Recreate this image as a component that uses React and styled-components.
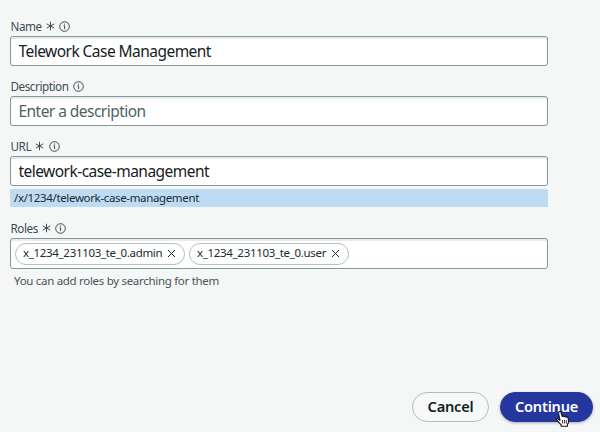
import React from "react";
import styled, { createGlobalStyle } from "styled-components";

const GlobalStyle = createGlobalStyle`
  * { box-sizing: border-box; }
  body { margin: 0; background: #f5f7f7; font-family: "Noto Sans", "Open Sans", sans-serif; }
`;

const Page = styled.main`
  width: 600px;
  height: 432px;
  padding: 18px 0 0 10px;
  display: flex;
  flex-direction: column;
  background: #f5f7f7;
  overflow: hidden;
`;

const Form = styled.form`
  width: 538px;
  display: flex;
  flex-direction: column;
`;

const Field = styled.section`
  display: flex;
  flex-direction: column;
  height: ${(p) => p.$height}px;
`;

const LabelRow = styled.div`
  display: flex;
  align-items: center;
  height: 16px;
  margin-bottom: 2px;
  color: #3d4d4f;
`;

const Label = styled.label`
  font-size: 11.7px;
  line-height: 15px;
  letter-spacing: -0.45px;
  padding-left: 0.5px;
`;

const Icon = styled.svg`
  flex: none;
  display: block;
  margin-left: ${(p) => p.$gap || 0}px;
  fill: none;
  stroke: currentColor;
`;

const Box = styled.div`
  display: flex;
  align-items: center;
  flex: none;
  height: ${(p) => p.$height || 30}px;
  padding-left: ${(p) => p.$inset || 7.5}px;
  gap: 4px;
  border: 1px solid #84979a;
  border-radius: 3px;
  background: #fff;
  box-shadow: inset 0 2px 0 #e8ecec;
`;

const Input = styled.input`
  width: 100%;
  height: 26px;
  padding: 0 0 1px;
  border: 0;
  outline: 0;
  background: transparent;
  color: #172022;
  font: 15.5px/25px "Noto Sans", "Open Sans", sans-serif;
  letter-spacing: -0.54px;
  &::placeholder { color: #506163; opacity: 1; }
`;

const UrlPreview = styled.div`
  height: 18px;
  margin-top: 3px;
  padding-left: 4px;
  flex: none;
  border-radius: 1px;
  background: #bddcf3;
  color: #1c2b30;
  font-size: 11.5px;
  line-height: 17px;
  letter-spacing: -0.35px;
`;

const Pill = styled.span`
  display: flex;
  align-items: center;
  justify-content: space-between;
  width: ${(p) => p.$width}px;
  height: 22px;
  padding: 0 8px 0 7px;
  border: 1px solid #b4c0c1;
  border-radius: 11px;
  background: #fff;
  color: #202a2c;
  font-size: 11.5px;
  line-height: 18px;
  letter-spacing: -0.32px;
`;

const PillText = styled.span`
  padding-bottom: 2px;
`;

const Hint = styled.p`
  margin: 3px 0 0 4px;
  color: #465557;
  font-size: 11.5px;
  line-height: 18px;
  letter-spacing: -0.3px;
`;

const Actions = styled.footer`
  display: flex;
  gap: 11px;
  margin: auto 7px 10px auto;
`;

const Button = styled.button`
  position: relative;
  width: ${(p) => p.$width}px;
  height: 30px;
  padding: 0 0 3px;
  border: 1px solid ${(p) => (p.$primary ? "#24379e" : "#b2bcbe")};
  border-radius: 15px;
  background: ${(p) => (p.$primary ? "#24379e" : "#f7f9f9")};
  box-shadow: ${(p) => (p.$primary ? "0 1px 3px #737c8299" : "none")};
  color: ${(p) => (p.$primary ? "#fff" : "#151f21")};
  font: 600 14.6px/26px "Noto Sans", "Open Sans", sans-serif;
  letter-spacing: -0.2px;
`;

const Pointer = styled.svg`
  position: absolute;
  left: 54px;
  top: 18px;
`;

const Required = () => (
  <Icon width="9" height="10" viewBox="0 0 9 10" $gap={4} strokeWidth="1">
    <path d="M4.5 .8v8.4M.8 2.9l7.4 4.2M8.2 2.9L.8 7.1" />
  </Icon>
);

const Info = () => (
  <Icon width="11" height="11" viewBox="0 0 11 11" $gap={4.5}>
    <circle cx="5.5" cy="5.5" r="4.8" strokeWidth="1" />
    <path d="M4.5 4.8h1.1v3.3" strokeWidth="1" />
    <circle cx="5.5" cy="3.1" r=".65" fill="currentColor" stroke="none" />
  </Icon>
);

const Role = ({ name, width }) => (
  <Pill $width={width}>
    <PillText>{name}</PillText>
    <Icon width="9" height="9" viewBox="0 0 9 9" strokeWidth="1">
      <path d="M1 1l7 7M8 1L1 8" />
    </Icon>
  </Pill>
);

const Heading = ({ children, required }) => (
  <LabelRow>
    <Label>{children}</Label>
    {required && <Required />}
    <Info />
  </LabelRow>
);

export default function App() {
  return (
    <>
      <GlobalStyle />
      <Page>
        <Form>
          <Field $height={60}>
            <Heading required>Name</Heading>
            <Box><Input aria-label="Name" defaultValue="Telework Case Management" /></Box>
          </Field>
          <Field $height={60}>
            <Heading>Description</Heading>
            <Box><Input aria-label="Description" placeholder="Enter a description" /></Box>
          </Field>
          <Field $height={82}>
            <Heading required>URL</Heading>
            <Box><Input aria-label="URL" defaultValue="telework-case-management" /></Box>
            <UrlPreview>/x/1234/telework-case-management</UrlPreview>
          </Field>
          <Field $height={70}>
            <Heading required>Roles</Heading>
            <Box $height={31} $inset={4}>
              <Role name="x_1234_231103_te_0.admin" width={170} />
              <Role name="x_1234_231103_te_0.user" width={160} />
            </Box>
            <Hint>You can add roles by searching for them</Hint>
          </Field>
        </Form>
        <Actions>
          <Button type="button" $width={77}>Cancel</Button>
          <Button type="button" $width={93} $primary>
            Continue
            <Pointer width="16" height="17" viewBox="0 0 16 17">
              <path d="M4 1C4 0 6 0 6 1.5L7.3 5.5Q8.4 4.5 9 5.8Q10.3 4.8 11 6.2Q13 5.4 13.3 8L13.6 10.5Q13.6 12.2 12.4 13.4V15.2H6.2V13.8L2 9.5C.7 8.1 2 7 3.4 8.2L5 9.4L3.5 2Z" fill="#fff" stroke="#161616" strokeWidth="1.1" strokeLinejoin="round" />
              <path d="M7.4 8.8l.4 3.8M9.4 8.8l.3 3.8M11.3 8.8l.1 3.8" stroke="#161616" strokeWidth=".8" />
            </Pointer>
          </Button>
        </Actions>
      </Page>
    </>
  );
}
